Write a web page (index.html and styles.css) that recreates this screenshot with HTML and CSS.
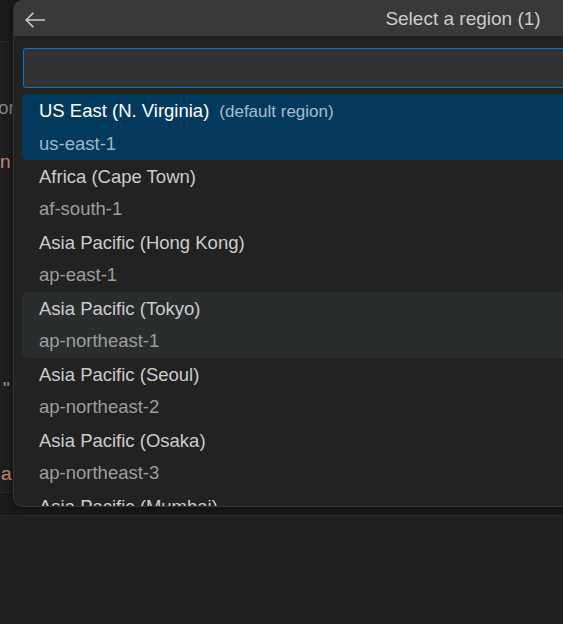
FILE: index.html
```html
<!DOCTYPE html>
<html lang="en">
<head>
<meta charset="utf-8">
<title>Select a region</title>
<link rel="stylesheet" href="styles.css">
</head>
<body>
<div class="workbench">
  <div class="editor">
    <div class="tabs"></div>
    <div class="code">
      <div class="ln ln-or gray">or</div>
      <div class="ln ln-n orange">n</div>
      <div class="ln ln-q orange">"</div>
      <div class="ln ln-a orange">a</div>
    </div>
  </div>
  <div class="status-strip"></div>
  <div class="panel"></div>

  <div class="quick-input">
    <div class="qi-title">
      <div class="qi-back">
        <svg width="20" height="16" viewBox="0 0 20 16" aria-hidden="true">
          <path d="M1.2 8 H19.5 M7.8 1.4 L1.2 8 L7.8 14.6" fill="none" stroke="#cccccc" stroke-width="1.5" stroke-linecap="square"/>
        </svg>
      </div>
      <div class="qi-title-text">Select a region (1)</div>
      <div></div>
    </div>
    <div class="qi-input"></div>
    <div class="qi-list">
      <div class="qi-item selected">
        <div class="qi-label">US East (N. Virginia)<span class="qi-desc">(default region)</span></div>
        <div class="qi-detail">us-east-1</div>
      </div>
      <div class="qi-item">
        <div class="qi-label">Africa (Cape Town)</div>
        <div class="qi-detail">af-south-1</div>
      </div>
      <div class="qi-item">
        <div class="qi-label">Asia Pacific (Hong Kong)</div>
        <div class="qi-detail">ap-east-1</div>
      </div>
      <div class="qi-item hover">
        <div class="qi-label">Asia Pacific (Tokyo)</div>
        <div class="qi-detail">ap-northeast-1</div>
      </div>
      <div class="qi-item">
        <div class="qi-label">Asia Pacific (Seoul)</div>
        <div class="qi-detail">ap-northeast-2</div>
      </div>
      <div class="qi-item">
        <div class="qi-label">Asia Pacific (Osaka)</div>
        <div class="qi-detail">ap-northeast-3</div>
      </div>
      <div class="qi-item">
        <div class="qi-label">Asia Pacific (Mumbai)</div>
      </div>
    </div>
  </div>
</div>
</body>
</html>
```

FILE: styles.css
```css
* { box-sizing: border-box; }

html, body {
  margin: 0;
  padding: 0;
  width: 563px;
  height: 624px;
  overflow: hidden;
  background: #1f1f1f;
  font-family: "Liberation Sans", Arial, sans-serif;
}

.workbench {
  position: relative;
  width: 563px;
  height: 624px;
  display: flex;
  flex-direction: column;
}

.editor {
  height: 492px;
  background: #1f1f1f;
  display: flex;
  flex-direction: column;
}

.tabs {
  height: 42px;
  background: #1b1b1b;
  border-bottom: 1px solid #2b2b2b;
}

.code {
  display: flex;
  flex-direction: column;
  font-size: 19px;
}

.ln {
  height: 27px;
  line-height: 27px;
  white-space: nowrap;
}

.ln-or { margin-top: 52px; margin-left: -2px; }
.ln-n { margin-top: 27px; }
.ln-q { margin-top: 200px; margin-left: 3px; }
.ln-a { margin-top: 58px; margin-left: 1px; }

.gray { color: #8b8b8b; }
.orange { color: #ce9178; }

.status-strip {
  height: 23px;
  background: #1a1a1a;
  border-top: 1px solid #2b2b2b;
}

.panel {
  flex: 1;
  background: #212121;
  border-top: 1px solid #2b2b2b;
}

/* Quick input overlay */
.quick-input {
  position: absolute;
  left: 13px;
  top: 0;
  width: 900px;
  height: 507px;
  background: #222222;
  border: 1px solid #333333;
  border-top: none;
  border-radius: 9px;
  overflow: hidden;
  box-shadow: 0 0 8px 2px rgba(0, 0, 0, 0.36);
  display: flex;
  flex-direction: column;
}

.qi-title {
  height: 36px;
  flex: none;
  background: #393939;
  display: grid;
  grid-template-columns: 1fr auto 1fr;
  align-items: center;
}

.qi-back {
  display: flex;
  align-items: center;
  padding-left: 11px;
  padding-top: 2px;
}

.qi-title-text {
  color: #cccccc;
  font-size: 19px;
  line-height: 36px;
  padding-top: 1px;
}

.qi-input {
  flex: none;
  margin: 12px 0 0 9px;
  height: 40px;
  background: #313131;
  border: 1px solid #0078d4;
  border-radius: 3px;
}

.qi-list {
  margin-top: 6px;
  padding-left: 8px;
  display: flex;
  flex-direction: column;
  overflow: hidden;
}

.qi-item {
  flex: none;
  height: 66px;
  padding: 1px 0 0 17px;
  border-radius: 6px;
  display: flex;
  flex-direction: column;
  white-space: nowrap;
}

.qi-label {
  color: #cccccc;
  font-size: 18.5px;
  line-height: 32px;
}

.qi-desc {
  margin-left: 10px;
  font-size: 17px;
  color: #9d9d9d;
}

.qi-detail {
  color: #9d9d9d;
  font-size: 18.5px;
  line-height: 32px;
}

.qi-item.selected { background: #04395e; }
.qi-item.selected .qi-label { color: #ffffff; }
.qi-item.selected .qi-desc { color: #a7bccc; }
.qi-item.selected .qi-detail { color: #9fb4c5; }

.qi-item.hover { background: #2a2d2e; }
```
